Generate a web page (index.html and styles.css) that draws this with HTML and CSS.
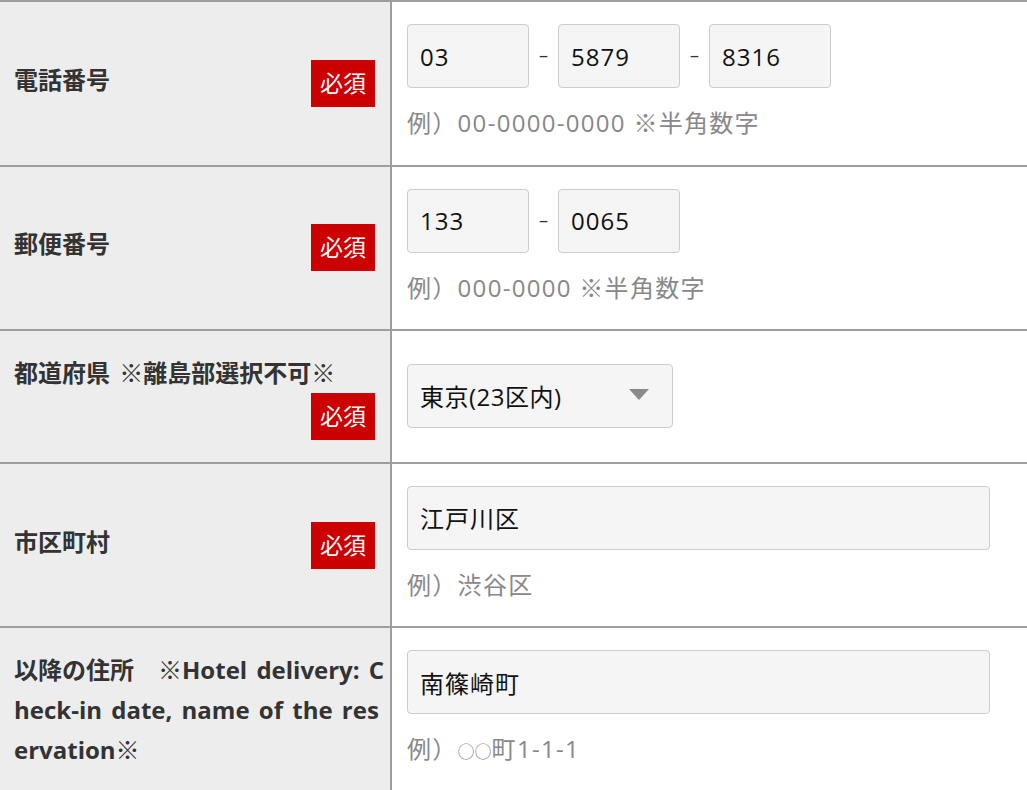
FILE: index.html
```html
<!DOCTYPE html>
<html lang="ja">
<head>
    <meta charset="UTF-8">
    <meta name="viewport" content="width=device-width, initial-scale=1.0">
    <title>お届け先情報</title>
    <link rel="stylesheet" href="styles.css">
</head>
<body>

    <table class="form-table">
        <tr>
            <th><div class="th-inner">電話番号<span class="required">必須</span></div></th>
            <td>
                <div class="field-row">
                    <input type="text" class="input-short" value="03">
                    <span class="sep">–</span>
                    <input type="text" class="input-short" value="5879">
                    <span class="sep">–</span>
                    <input type="text" class="input-short" value="8316">
                </div>
                <p class="hint">例）00-0000-0000 ※半角数字</p>
            </td>
        </tr>
        <tr>
            <th><div class="th-inner">郵便番号<span class="required">必須</span></div></th>
            <td>
                <div class="field-row">
                    <input type="text" class="input-short" value="133">
                    <span class="sep">–</span>
                    <input type="text" class="input-short" value="0065">
                </div>
                <p class="hint">例）000-0000 ※半角数字</p>
            </td>
        </tr>
        <tr>
            <th><div class="th-inner">都道府県 ※離島部選択不可※<span class="required">必須</span></div></th>
            <td>
                <span class="select-wrap">
                    <select class="select-pref">
                        <option selected>東京(23区内)</option>
                        <option>東京(23区外)</option>
                        <option>神奈川県</option>
                        <option>埼玉県</option>
                        <option>千葉県</option>
                    </select>
                </span>
            </td>
        </tr>
        <tr>
            <th><div class="th-inner">市区町村<span class="required">必須</span></div></th>
            <td>
                <input type="text" class="input-long" value="江戸川区">
                <p class="hint">例）渋谷区</p>
            </td>
        </tr>
        <tr>
            <th><div class="th-inner">以降の住所　※Hotel delivery: Check-in date, name of the reservation※</div></th>
            <td>
                <input type="text" class="input-long" value="南篠崎町">
                <p class="hint">例）<span class="circle">○○</span>町1-1-1</p>
            </td>
        </tr>
    </table>

</body>
</html>
```

FILE: styles.css
```css
body {
    margin: 0;
    padding: 0;
    background-color: #ffffff;
    font-family: "Open Sans", "Noto Sans CJK JP", sans-serif;
    font-size: 24px;
    line-height: 1.65;
    color: #333333;
}

/* таблица формы */
.form-table {
    width: 100%;
    border-collapse: separate;
    border-spacing: 0;
    border-top: 2px solid #9e9e9e;
}
.form-table th,
.form-table td {
    border-bottom: 2px solid #9e9e9e;
    vertical-align: middle;
}
.form-table th {
    box-sizing: border-box;
    width: 392px;
    padding: 22px 3px 22px 14px;
    background-color: #ededed;
    border-right: 2px solid #9e9e9e;
    text-align: left;
    font-weight: bold;
    color: #333333;
    word-break: break-all;
    word-spacing: 3px;
}
.th-inner {
    display: flow-root;
}
.required {
    float: right;
    width: 64px;
    height: 47px;
    margin-right: 12px;
    background-color: #cc0000;
    color: #ffffff;
    font-weight: normal;
    font-size: 23px;
    line-height: 47px;
    text-align: center;
    word-spacing: 0;
}
.form-table td {
    padding: 22px 15px;
    background-color: #ffffff;
}

/* поля ввода */
.field-row {
    display: flex;
    align-items: center;
}
.sep {
    width: 29px;
    text-align: center;
    font-size: 18px;
    color: #333333;
}
.input-short,
.input-long,
.select-pref {
    box-sizing: border-box;
    height: 64px;
    margin: 0;
    padding: 0 12px;
    border: 1px solid #cccccc;
    border-radius: 4px;
    background-color: #f5f5f5;
    font-family: inherit;
    font-size: 24px;
    color: #111111;
    letter-spacing: 1px;
    outline: none;
}
.input-short {
    width: 122px;
}
.input-long {
    display: block;
    width: 583px;
}
.select-wrap {
    position: relative;
    display: inline-block;
}
.select-pref {
    width: 266px;
    appearance: none;
    -webkit-appearance: none;
    letter-spacing: 0.5px;
}
.select-wrap::after {
    content: "";
    position: absolute;
    right: 24px;
    top: 25px;
    border-left: 10px solid transparent;
    border-right: 10px solid transparent;
    border-top: 11px solid #8a8a8a;
    pointer-events: none;
}

/* подсказки */
.hint {
    margin: 15px 0 0;
    color: #888888;
    font-size: 24px;
    letter-spacing: 1.3px;
}
.hint .circle {
    font-size: 17px;
    letter-spacing: 0;
}
```
